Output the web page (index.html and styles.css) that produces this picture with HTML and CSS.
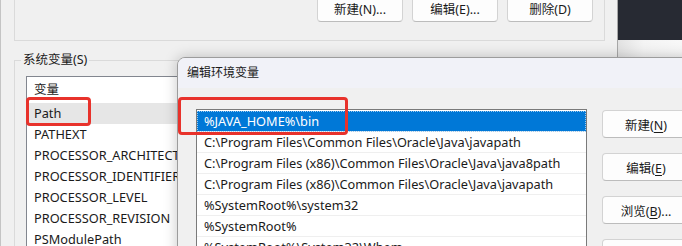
FILE: index.html
```html
<!DOCTYPE html>
<html lang="zh-CN">
<head>
    <meta charset="UTF-8">
    <title>编辑环境变量</title>
    <link rel="stylesheet" href="styles.css">
</head>
<body>
    <div class="screen">
        <div class="win">
            <div class="group top-group">
                <div class="btn-row">
                    <button class="btn">新建(N)...</button>
                    <button class="btn">编辑(E)...</button>
                    <button class="btn">删除(D)</button>
                </div>
            </div>
            <div class="group sys-group">
                <span class="group-title">系统变量(S)</span>
                <div class="listview">
                    <div class="lv-head">变量</div>
                    <div class="lv-row hot">Path</div>
                    <div class="lv-row">PATHEXT</div>
                    <div class="lv-row">PROCESSOR_ARCHITECTURE</div>
                    <div class="lv-row">PROCESSOR_IDENTIFIER</div>
                    <div class="lv-row">PROCESSOR_LEVEL</div>
                    <div class="lv-row">PROCESSOR_REVISION</div>
                    <div class="lv-row">PSModulePath</div>
                </div>
            </div>
        </div>
        <div class="side">
            <div class="side-dark"></div>
        </div>

        <div class="dialog">
            <div class="dlg-title">编辑环境变量</div>
            <div class="dlg-body">
                <div class="listbox">
                    <div class="lb-row selected">%JAVA_HOME%\bin</div>
                    <div class="lb-row">C:\Program Files\Common Files\Oracle\Java\javapath</div>
                    <div class="lb-row">C:\Program Files (x86)\Common Files\Oracle\Java\java8path</div>
                    <div class="lb-row">C:\Program Files (x86)\Common Files\Oracle\Java\javapath</div>
                    <div class="lb-row">%SystemRoot%\system32</div>
                    <div class="lb-row">%SystemRoot%</div>
                    <div class="lb-row">%SystemRoot%\System32\Wbem</div>
                </div>
                <div class="dlg-buttons">
                    <button class="btn dlg-btn">新建(<u>N</u>)</button>
                    <button class="btn dlg-btn">编辑(<u>E</u>)</button>
                    <button class="btn dlg-btn">浏览(<u>B</u>)...</button>
                    <button class="btn dlg-btn">删除(<u>D</u>)</button>
                </div>
            </div>
        </div>

        <div class="mark mark-path"></div>
        <div class="mark mark-java"></div>
    </div>
</body>
</html>
```

FILE: styles.css
```css
body {
    margin: 0;
    padding: 0;
    overflow: hidden;
    font-family: "Noto Sans", "Noto Sans CJK SC", sans-serif;
    font-size: 12.75px;
    color: #1a1a1a;
}

.screen {
    position: relative;
    width: 682px;
    height: 246px;
    overflow: hidden;
    display: flex;
}

.win {
    width: 618px;
    height: 246px;
    background-color: #f0f0f0;
    border-right: 1px solid #a8a8a8;
    border-left: 1px solid #c4c4c4;
    box-sizing: border-box;
    padding-left: 1px;
}

.side {
    flex: 1;
    background: linear-gradient(to right, #e2e2e2, #f4f4f4 40%, #f8f8f8);
}

.side-dark {
    height: 40px;
    background-color: #272a33;
}

.group {
    border: 1px solid #dadada;
    margin-left: 12px;
}

.top-group {
    width: 589px;
    height: 49px;
    margin-top: -10px;
}

.btn-row {
    display: flex;
    justify-content: flex-end;
    gap: 9px;
    padding-right: 11px;
    margin-top: 4px;
}

.btn {
    font-family: "Noto Sans", "Noto Sans CJK SC", sans-serif;
    font-size: 12.5px;
    color: #1a1a1a;
    background-color: #fdfdfd;
    border: 1px solid #d3d3d3;
    border-bottom-color: #bcbcbc;
    border-radius: 4px;
    padding: 0;
    width: 86px;
    height: 27px;
}

.btn u {
    text-decoration-thickness: 1px;
    text-underline-offset: 2px;
}

.sys-group {
    position: relative;
    margin-top: 19px;
    height: 220px;
    border-right: none;
}

.group-title {
    position: absolute;
    top: -9px;
    left: 6px;
    padding: 0 2px;
    background-color: #f0f0f0;
    line-height: 16px;
    font-size: 12.5px;
}

.listview {
    margin: 15px 0 0 11px;
    width: 200px;
    height: 200px;
    background-color: #fff;
    border: 1px solid #82868f;
    border-right: none;
}

.lv-head {
    height: 26px;
    line-height: 26px;
    padding-left: 7px;
    font-size: 12.5px;
}

.lv-row {
    height: 21px;
    line-height: 21px;
    padding-left: 7px;
    white-space: nowrap;
}

.lv-row.hot {
    background-color: #e6e6e6;
}

.dialog {
    position: absolute;
    left: 177px;
    top: 57px;
    width: 540px;
    height: 220px;
    background-color: #f0f0f0;
    border: 1px solid #9c9c9c;
    border-top-left-radius: 8px;
    box-shadow: 0 0 14px rgba(0, 0, 0, 0.22);
    overflow: hidden;
}

.dlg-title {
    height: 30px;
    line-height: 30px;
    padding-left: 9px;
    font-size: 12px;
    background-color: #f1f2f8;
}

.dlg-body {
    display: flex;
    gap: 15px;
    padding: 21px 0 0 18px;
}

.listbox {
    width: 389px;
    height: 200px;
    background-color: #fff;
    border: 1px solid #7a7a7a;
    padding-top: 1px;
}

.lb-row {
    height: 20px;
    line-height: 20px;
    padding-left: 7px;
    border-bottom: 1px solid #efefef;
    white-space: nowrap;
    overflow: hidden;
}

.lb-row.selected {
    background-color: #0078d7;
    color: #fff;
    outline: 1px dotted #9ccaf0;
    outline-offset: -1px;
}

.dlg-buttons {
    display: flex;
    flex-direction: column;
    gap: 15px;
    padding-top: 1px;
}

.dlg-btn {
    width: 88px;
    height: 28px;
}

.mark {
    position: absolute;
    border: 3px solid #e8322b;
    border-radius: 4px;
}

.mark-path {
    left: 26px;
    top: 97px;
    width: 59px;
    height: 23px;
}

.mark-java {
    left: 178px;
    top: 97px;
    width: 164px;
    height: 32px;
}
```
